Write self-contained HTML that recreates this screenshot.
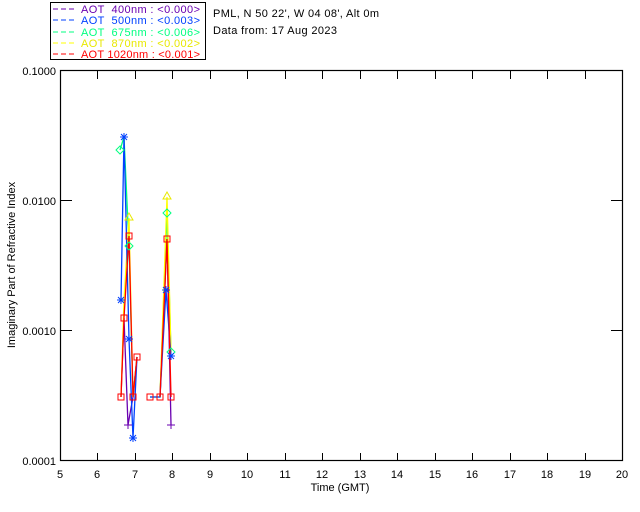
<!DOCTYPE html>
<html><head><style>
html,body{margin:0;padding:0;background:#fff;width:640px;height:512px;overflow:hidden}
svg text{font-family:"Liberation Sans",sans-serif;font-size:11px}
</style></head><body>
<svg width="640" height="512" viewBox="0 0 640 512" xmlns="http://www.w3.org/2000/svg">
<rect x="0" y="0" width="640" height="512" fill="#fff"/>
<!-- legend -->
<rect x="50.5" y="2.5" width="155" height="57" fill="none" stroke="#000" stroke-width="1"/>
<g stroke-width="1" stroke-dasharray="5,3">
<line x1="53" y1="9" x2="77" y2="9" stroke="#6a00b0"/>
<line x1="53" y1="20" x2="77" y2="20" stroke="#0040ff"/>
<line x1="53" y1="32" x2="77" y2="32" stroke="#00ff80"/>
<line x1="53" y1="43" x2="77" y2="43" stroke="#ffff00"/>
<line x1="53" y1="54" x2="77" y2="54" stroke="#ff0000"/>
</g>
<g lengthAdjust="spacing">
<text x="81" y="13" fill="#6a00b0" xml:space="preserve" textLength="119">AOT  400nm : &lt;0.000&gt;</text>
<text x="81" y="24" fill="#0040ff" xml:space="preserve" textLength="119">AOT  500nm : &lt;0.003&gt;</text>
<text x="81" y="36" fill="#00ff80" xml:space="preserve" textLength="119">AOT  675nm : &lt;0.006&gt;</text>
<text x="81" y="47" fill="#e8e800" xml:space="preserve" textLength="119">AOT  870nm : &lt;0.002&gt;</text>
<text x="81" y="58" fill="#ff0000" xml:space="preserve" textLength="119">AOT 1020nm : &lt;0.001&gt;</text>
<text x="213" y="17" fill="#000" textLength="166">PML, N 50 22', W 04 08', Alt 0m</text>
<text x="213" y="34" fill="#000" textLength="124">Data from: 17 Aug 2023</text>
</g>
<!-- axes -->
<rect x="60.5" y="70.5" width="562" height="390" fill="none" stroke="#000" stroke-width="1.2"/>
<g stroke="#000" stroke-width="1">
<path d="M97.5 461v-8M135.5 461v-8M172.5 461v-8M210.5 461v-8M247.5 461v-8M285.5 461v-8M322.5 461v-8M360.5 461v-8M397.5 461v-8M435.5 461v-8M472.5 461v-8M510.5 461v-8M547.5 461v-8M585.5 461v-8"/>
<path d="M97.5 71v8M135.5 71v8M172.5 71v8M210.5 71v8M247.5 71v8M285.5 71v8M322.5 71v8M360.5 71v8M397.5 71v8M435.5 71v8M472.5 71v8M510.5 71v8M547.5 71v8M585.5 71v8"/>
<path d="M61 200.5h11M61 330.5h11M622 200.5h-11M622 330.5h-11"/>
</g>
<g fill="#000" text-anchor="end">
<text x="56" y="75">0.1000</text><text x="56" y="205">0.0100</text>
<text x="56" y="335">0.0010</text><text x="56" y="465">0.0001</text>
</g>
<g fill="#000" text-anchor="middle">
<text x="60" y="478">5</text><text x="97" y="478">6</text><text x="135" y="478">7</text><text x="172" y="478">8</text><text x="210" y="478">9</text><text x="247" y="478">10</text><text x="285" y="478">11</text><text x="322" y="478">12</text><text x="360" y="478">13</text><text x="397" y="478">14</text><text x="435" y="478">15</text><text x="472" y="478">16</text><text x="510" y="478">17</text><text x="547" y="478">18</text><text x="585" y="478">19</text><text x="622" y="478">20</text>
<text x="340" y="491">Time (GMT)</text>
<text x="0" y="0" transform="translate(15,265) rotate(-90)">Imaginary Part of Refractive Index</text>
</g>
<!-- data -->
<g fill="none" stroke-width="1.3">
<polyline stroke="#6a00b0" points="121,397 124,318 128,425 133,397 137,357"/>
<polyline stroke="#6a00b0" points="160,397 167,239 171,425"/>
<polyline stroke="#00ff80" points="120,150 124,137 129,246 133,397 137,357"/>
<polyline stroke="#00ff80" points="150,397 160,397 167,213 171,352"/>
<polyline stroke="#ffff00" points="121,397 124,300 129,218 133,397 137,357"/>
<polyline stroke="#ffff00" points="160,397 167,197 171,352"/>
<polyline stroke="#0040ff" points="121,300 124,137 129,339 133,438 137,357"/>
<polyline stroke="#0040ff" points="150,397 160,397 166,290 171,356"/>
<polyline stroke="#ff0000" points="121,397 124,318 129,236 133,397 137,357"/>
<polyline stroke="#ff0000" points="160,397 167,239 171,397"/>
</g>
<g fill="none" stroke-width="1">
<g stroke="#ff0000">
<rect x="118" y="394" width="6" height="6"/><rect x="121" y="315" width="6" height="6"/><rect x="126" y="233" width="6" height="6"/>
<rect x="130" y="394" width="6" height="6"/><rect x="134" y="354" width="6" height="6"/><rect x="147" y="394" width="6" height="6"/>
<rect x="157" y="394" width="6" height="6"/><rect x="164" y="236" width="6" height="6"/><rect x="168" y="394" width="6" height="6"/>
</g>
<g stroke="#00ff80">
<path d="M120 146l4 4-4 4-4-4zM129 242l4 4-4 4-4-4zM167 209l4 4-4 4-4-4zM171 348l4 4-4 4-4-4z"/>
</g>
<g stroke="#e8e800">
<path d="M129 213l4 7h-8zM167 192l4 7h-8z"/>
</g>
<g stroke="#0040ff">
<path d="M120 137h8M124 133v8M121 134l6 6M127 134l-6 6"/>
<path d="M117 300h8M121 296v8M118 297l6 6M124 297l-6 6"/>
<path d="M125 339h8M129 335v8M126 336l6 6M132 336l-6 6"/>
<path d="M129 438h8M133 434v8M130 435l6 6M136 435l-6 6"/>
<path d="M162 290h8M166 286v8M163 287l6 6M169 287l-6 6"/>
<path d="M167 356h8M171 352v8M168 353l6 6M174 353l-6 6"/>
</g>
<g stroke="#6a00b0">
<path d="M124 425h8M128 421v8M167 425h8M171 421v8"/>
</g>
</g>
</svg>
</body></html>
